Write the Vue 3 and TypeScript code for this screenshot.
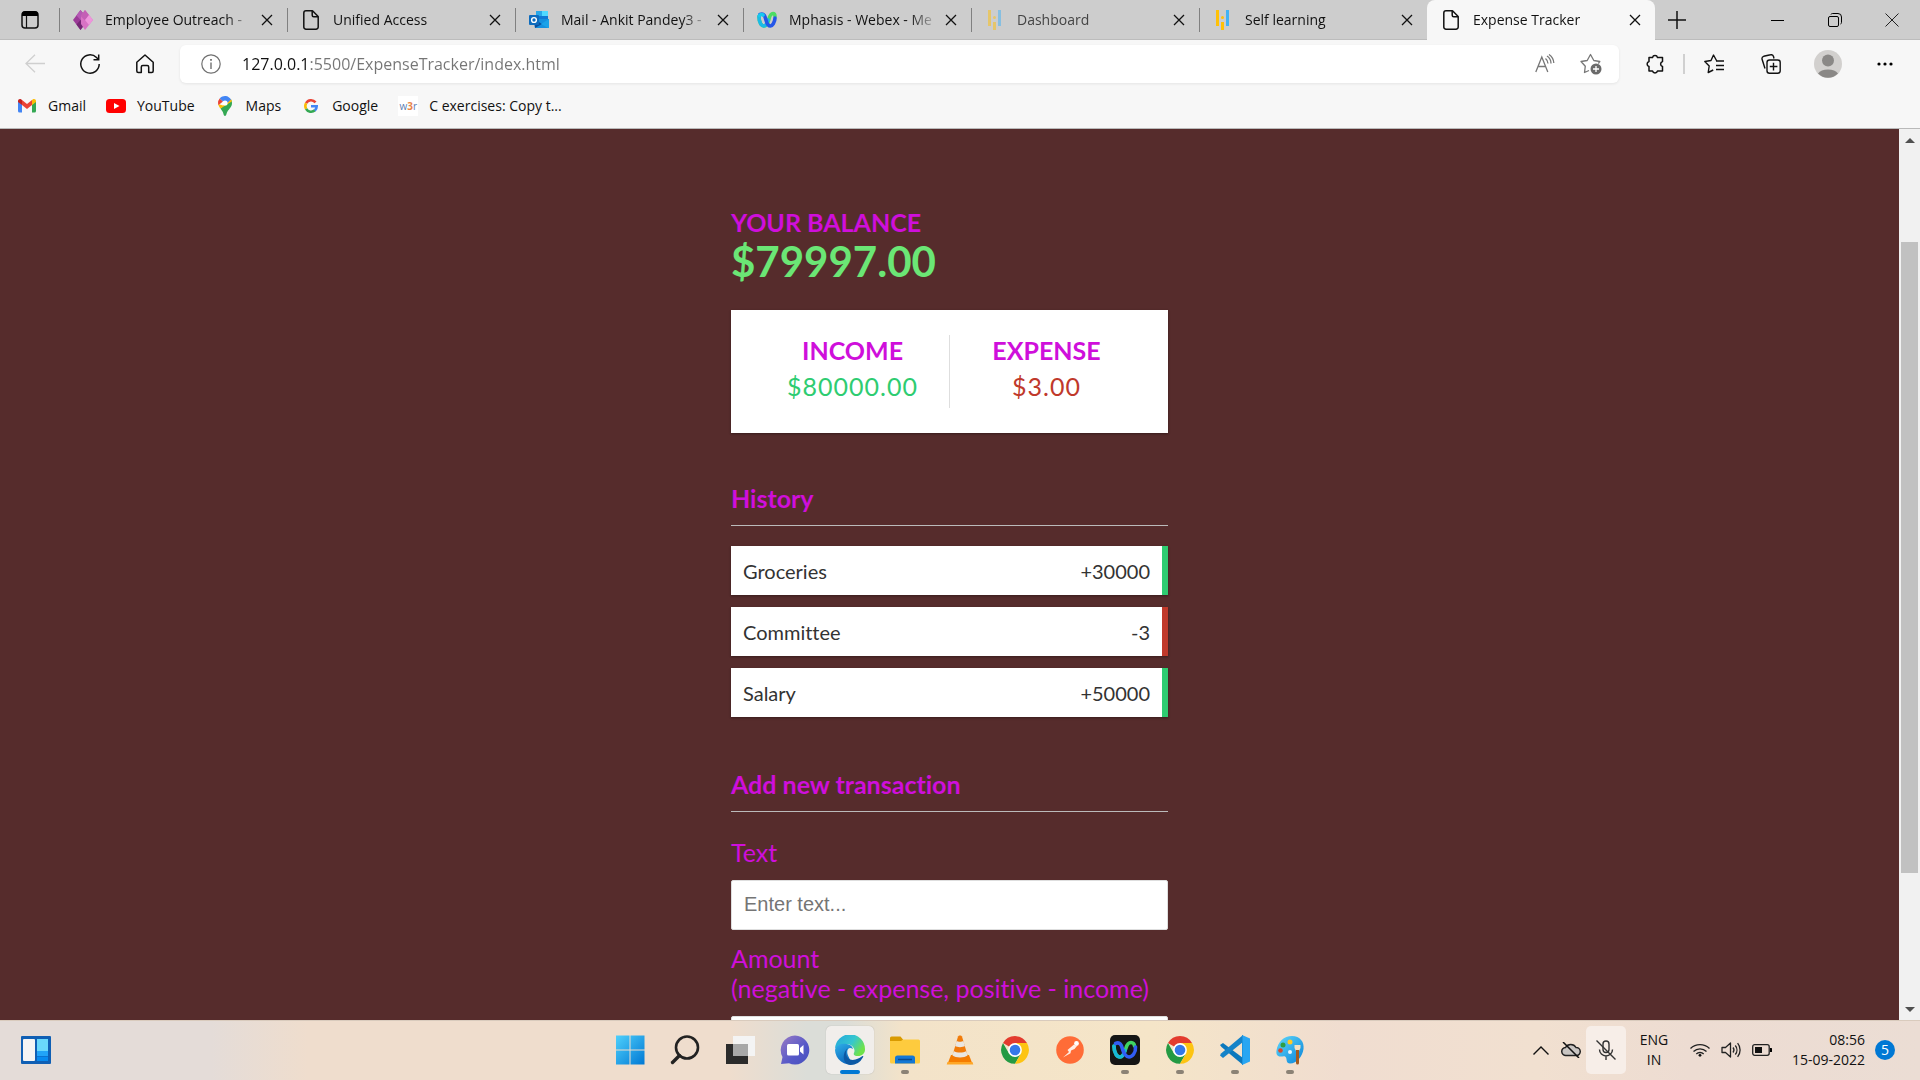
<script setup lang="ts">
import { computed, ref } from 'vue'

interface Tab {
  title: string
  icon: string
  faded?: boolean
}
interface Transaction {
  text: string
  amount: number
}
interface TaskbarApp {
  name: string
  icon: string
  running?: boolean
  active?: boolean
}

const tabs: Tab[] = [
  { title: 'Employee Outreach -', icon: 'powerapps' },
  { title: 'Unified Access', icon: 'page' },
  { title: 'Mail - Ankit Pandey3 -', icon: 'outlook' },
  { title: 'Mphasis - Webex - Me', icon: 'webex' },
  { title: 'Dashboard', icon: 'bars', faded: true },
  { title: 'Self learning', icon: 'bars' },
  { title: 'Expense Tracker', icon: 'page' },
]
const activeTab = ref(6)

const bookmarks = [
  { label: 'Gmail', icon: 'gmail' },
  { label: 'YouTube', icon: 'youtube' },
  { label: 'Maps', icon: 'maps' },
  { label: 'Google', icon: 'google' },
  { label: 'C exercises: Copy t...', icon: 'w3r' },
]

const url = ref('127.0.0.1:5500/ExpenseTracker/index.html')

const transactions = ref<Transaction[]>([
  { text: 'Groceries', amount: 30000 },
  { text: 'Committee', amount: -3 },
  { text: 'Salary', amount: 50000 },
])
const sum = (list: Transaction[]) => list.reduce((total, t) => total + t.amount, 0)
const balance = computed(() => sum(transactions.value).toFixed(2))
const income = computed(() => sum(transactions.value.filter((t) => t.amount > 0)).toFixed(2))
const expense = computed(() => Math.abs(sum(transactions.value.filter((t) => t.amount < 0))).toFixed(2))
const signed = (n: number) => (n < 0 ? `-${Math.abs(n)}` : `+${n}`)

const newText = ref('')
const newAmount = ref('')

const apps: TaskbarApp[] = [
  { name: 'Start', icon: 'start' },
  { name: 'Search', icon: 'search' },
  { name: 'Task View', icon: 'taskview' },
  { name: 'Chat', icon: 'chat' },
  { name: 'Microsoft Edge', icon: 'edge', running: true, active: true },
  { name: 'File Explorer', icon: 'folder', running: true },
  { name: 'VLC', icon: 'vlc' },
  { name: 'Chrome', icon: 'chrome' },
  { name: 'Postman', icon: 'postman' },
  { name: 'Webex', icon: 'webexapp', running: true },
  { name: 'Chrome profile', icon: 'chrome', running: true },
  { name: 'Visual Studio Code', icon: 'vscode', running: true },
  { name: 'Paint', icon: 'paint', running: true },
]
</script>

<template>
  <div class="screen">
    <header class="browser">
      <div class="tabstrip">
        <button class="tab-actions" aria-label="Tab actions menu">
          <svg width="20" height="20" viewBox="0 0 20 20"><rect x="2" y="2" width="16" height="16" rx="3" fill="none" stroke="#111" stroke-width="1.5" /><path d="M2 6V4a3 3 0 0 1 3-3h10a3 3 0 0 1 3 3v2z" fill="#000" /><path d="M6.500 6v12" stroke="#111" stroke-width="1.200" /></svg>
        </button>
        <div class="tabs">
          <div
            v-for="(tab, i) in tabs"
            :key="tab.title"
            class="tab"
            :class="{ active: i === activeTab, faded: tab.faded }"
          >
            <button class="tab-main" @click="activeTab = i">
              <svg v-if="tab.icon === 'powerapps'" class="fav" viewBox="0 0 20 20"><path d="M7.500 0 0 10l7.500 10 5-6.500V6z" fill="#9b3a97" /><path d="M3.500 5.500 7.500 0l4 5.500-4 4.500z" fill="#b558b4" /><path d="M3.500 14.500 7.500 10l4 4.500-4 5.500z" fill="#742774" /><path d="M12 0 8 6v8l4 6 8-10z" fill="#d872c4" /><path d="m12 0-4.500 6 4.500 4.500L16 5z" fill="#c45fb5" /><path d="m12 10 4-5 4 5-4 5z" fill="#ee96dc" /></svg>
              <svg v-else-if="tab.icon === 'page'" class="fav" viewBox="0 0 20 20" fill="none" stroke="#111" stroke-width="1.500" stroke-linejoin="round"><path d="M5 .8h6.500L17.200 6.500V17a2.200 2.200 0 0 1-2.200 2.200H5A2.200 2.200 0 0 1 2.800 17V3A2.200 2.200 0 0 1 5 .8z" /><path d="M11.200 1v4.200a1.500 1.500 0 0 0 1.500 1.500H17" /></svg>
              <svg v-else-if="tab.icon === 'outlook'" class="fav" viewBox="0 0 20 20"><path d="M7 1h12v9H7z" fill="#0f78d4" /><path d="M13 1h6v5h-6z" fill="#50d9ff" /><path d="M7 1h6v5H7z" fill="#28a8ea" /><path d="M5 9h15v9H6z" fill="#1490df" /><path d="m5 9 8 5-7 4z" fill="#0a4f9e" /><path d="m20 9-8 5 7 4h1z" fill="#1ba2e8" /><rect y="5" width="10" height="10" rx="1" fill="#0f6cbd" /><circle cx="5" cy="10" r="2.400" fill="none" stroke="#fff" stroke-width="1.400" /></svg>
              <svg v-else-if="tab.icon === 'webex'" class="fav" viewBox="0 0 20 20" fill="none" stroke-width="3.600" stroke-linecap="round"><path d="M2 6.500C2 14 5 16 7 16s4-3 5-7 2.500-5.500 4-5.500 2 1.500 2 3" stroke="#4cdd62" /><path d="M2 6.500C2 14 5 16 7 16s3-3 4-6" stroke="#1bb9e8" /><path d="M3 4.500C7 3 8 6 9 10s3 6 4.500 6S18 12.500 18 8" stroke="#2456e8" /><path d="M2.500 5.500C3 4.500 5 4 6 5" stroke="#17c8ef" /></svg>
              <svg v-else class="fav" viewBox="0 0 20 20"><path d="M3 0h3v16H3zM8 12h3v8H8z" fill="#ffc107" /><circle cx="9.500" cy="7.500" r="1.500" fill="#ffc107" /><path d="M13 0h3v16h-3z" fill="#42b3f5" /></svg>
              <span class="tab-title">{{ tab.title }}</span>
            </button>
            <button class="tab-close" :aria-label="`Close ${tab.title}`">
              <svg width="12" height="12" viewBox="0 0 12 12"><path d="m1 1 10 10M11 1 1 11" stroke="#111" stroke-width="1.300" /></svg>
            </button>
          </div>
        </div>
        <button class="new-tab" aria-label="New tab">
          <svg width="18" height="18" viewBox="0 0 18 18"><path d="M9 0v18M0 9h18" stroke="#111" stroke-width="1.500" /></svg>
        </button>
        <div class="window-controls">
          <button aria-label="Minimize"><svg width="14" height="14" viewBox="0 0 14 14"><path d="M0 7.500h13" stroke="#000" /></svg></button>
          <button aria-label="Restore"><svg width="14" height="14" viewBox="0 0 14 14" fill="none" stroke="#000"><rect x=".5" y="3.500" width="10" height="10" rx="1.500" /><path d="M3 1.500A1.500 1.500 0 0 1 4.500.5H10A3.500 3.500 0 0 1 13.500 4v5.500A1.500 1.500 0 0 1 12.500 11" /></svg></button>
          <button aria-label="Close window"><svg width="14" height="14" viewBox="0 0 14 14"><path d="m.5.5 13 13M13.500.5l-13 13" stroke="#222" /></svg></button>
        </div>
      </div>

      <div class="toolbar">
        <nav class="nav-buttons">
          <button aria-label="Back"><svg width="20" height="20" viewBox="0 0 20 20" fill="none" stroke="#cfcfcf" stroke-width="1.300"><path d="M20 9.500H1M10 .8 1 9.500l9 8.700" /></svg></button>
          <button aria-label="Refresh"><svg width="20" height="20" viewBox="0 0 20 20" fill="none" stroke="#111" stroke-width="1.500"><path d="M19.200 10A9.200 9.200 0 1 1 16.500 3.500L18.500 5.500" /><path d="M18.700.5v5.200h-5.200" /></svg></button>
          <button aria-label="Home"><svg width="20" height="20" viewBox="0 0 20 20" fill="none" stroke="#111" stroke-width="1.500" stroke-linejoin="round"><path d="M1.800 8.200 10 1l8.200 7.200V17a1.500 1.500 0 0 1-1.500 1.500h-3V13a1.500 1.500 0 0 0-1.500-1.500H7.800A1.500 1.500 0 0 0 6.300 13v5.500h-3A1.500 1.500 0 0 1 1.800 17z" /></svg></button>
        </nav>
        <div class="address">
          <button class="site-info" aria-label="View site information"><svg width="20" height="20" viewBox="0 0 20 20" fill="none" stroke="#707070" stroke-width="1.200"><circle cx="10" cy="10" r="9.200" /><path d="M10 8.500V15" stroke-width="1.400" /><path d="M10 5v1.800" stroke-width="1.800" /></svg></button>
          <input v-model="url" class="url" type="text" aria-label="Address and search bar" spellcheck="false" />
          <button aria-label="Read aloud"><svg width="20" height="20" viewBox="0 0 20 20" fill="none" stroke="#777" stroke-width="1.300"><path d="m.8 18 6-15 6 15M3 12.500h7.600" /><path d="M10.500 4.500a7 7 0 0 1 2.500 5M12 2a9 9 0 0 1 4 7.500M14 .5A11 11 0 0 1 18.800 9" /></svg></button>
          <button aria-label="Add to favorites"><svg width="22" height="22" viewBox="0 0 22 22" fill="none" stroke="#777" stroke-width="1.300" stroke-linejoin="round"><path d="M9 17.500 4.500 19.500l.8-6.300L1 8.500 7.200 7.500 10.500 1.500l3.300 6 6 1-1.500 2" /><circle cx="16" cy="16" r="5.500" fill="#6a6a6a" stroke="none" /><path d="M16 13v6M13 16h6" stroke="#fff" /></svg></button>
        </div>
        <div class="toolbar-actions">
          <button aria-label="Extensions"><svg width="20" height="20" viewBox="0 0 20 20" fill="none" stroke="#111" stroke-width="1.500" stroke-linejoin="round"><path d="M4 3.500h3.500a2.600 2.600 0 0 1 5 0H17.500V7.500a2.600 2.600 0 0 0 0 5V17h-5a2.600 2.600 0 0 1-5 0H4v-4.500a2.600 2.600 0 0 1 0-5z" /></svg></button>
          <span class="divider"></span>
          <button aria-label="Favorites"><svg width="20" height="20" viewBox="0 0 20 20" fill="none" stroke="#111" stroke-width="1.400" stroke-linejoin="round"><path d="M12.500 6.500 9.500 1 7 6.500.8 7.500 5.200 12l-1 6.500 5-2.500M12 7h8M12 11.500h8M12 15.500h8" /></svg></button>
          <button aria-label="Collections"><svg width="20" height="20" viewBox="0 0 20 20" fill="none" stroke="#111" stroke-width="1.400"><path d="M4 14.500 1 5a2.500 2.500 0 0 1 1.700-2.700L9.500.8A2.500 2.500 0 0 1 12.500 2.500l.5 2" /><rect x="6" y="6" width="13.200" height="13.200" rx="2.500" /><path d="M12.500 8.800v7.600M8.800 12.500h7.600" /></svg></button>
          <button aria-label="Profile"><svg width="28" height="28" viewBox="0 0 28 28"><circle cx="14" cy="14" r="14" fill="#d2d0ce" /><circle cx="14" cy="10.500" r="6" fill="#8a8886" /><path d="M4 23.500a11 7 0 0 1 20 0 14 14 0 0 1-20 0z" fill="#8a8886" /></svg></button>
          <button aria-label="Settings and more"><svg width="16" height="4" viewBox="0 0 16 4"><circle cx="2" cy="2" r="1.600" /><circle cx="8" cy="2" r="1.600" /><circle cx="14" cy="2" r="1.600" /></svg></button>
        </div>
      </div>

      <nav class="bookmarks" aria-label="Favorites bar">
        <a v-for="b in bookmarks" :key="b.label" href="#">
          <svg v-if="b.icon === 'gmail'" width="20" height="20" viewBox="-1 0 20 20"><path d="M0 5v10a1.500 1.500 0 0 0 1.500 1.500H4V8.500z" fill="#4285f4" /><path d="M18 5v10a1.500 1.500 0 0 1-1.500 1.500H14V8.500z" fill="#34a853" /><path d="M14 4v5l4-3V5c0-2-2-2.500-3-1.700z" fill="#fbbc04" /><path d="M0 5v1l4 3V4L3 3.300C2 2.500 0 3 0 5z" fill="#c5221f" /><path d="m4 4 5 4 5-4v5l-5 4-5-4z" fill="#ea4335" /></svg>
          <svg v-else-if="b.icon === 'youtube'" width="20" height="20" viewBox="0 0 20 20"><rect y="3" width="20" height="14" rx="3.500" fill="#f00" /><path d="m8 7 5.500 3L8 13z" fill="#fff" /></svg>
          <svg v-else-if="b.icon === 'maps'" width="20" height="20" viewBox="-3 0 20 20"><path d="M14 7c0 4-3 6-4.500 8.500C8.500 17 8.500 20 7 20s-1.500-3-2.500-4.500L2.500 12.500 13 3.500c.7 1 1 2.200 1 3.500z" fill="#34a853" /><path d="M2.500 12.500C1.200 11 .5 9.500.2 8L5 9.500 9 5l4-2c.5 1 .8 2 .8 2.500z" fill="#fbbc04" /><path d="M0 7a7 7 0 0 1 1.700-4.600L5 5.500.5 9A7 7 0 0 1 0 7z" fill="#ea4335" /><path d="M1.700 2.400A7 7 0 0 1 13 3.500L8 8 4.500 5z" fill="#4285f4" /><circle cx="7" cy="7" r="2.600" fill="#fff" /></svg>
          <svg v-else-if="b.icon === 'google'" width="20" height="20" viewBox="-3 0 20 20" fill="none" stroke-width="2.600"><path d="M11.500 6.300A5.700 5.700 0 0 0 2.100 7.200" stroke="#ea4335" /><path d="M2.100 7.200a5.700 5.700 0 0 0 0 5.600" stroke="#fbbc05" /><path d="M2.100 12.800a5.700 5.700 0 0 0 8.800 1.500" stroke="#34a853" /><path d="M10.800 14.500A5.700 5.700 0 0 0 12.700 10.200H7" stroke="#4285f4" /></svg>
          <span v-else class="w3r">w<b>3</b>r</span>
          <span>{{ b.label }}</span>
        </a>
      </nav>
    </header>

    <div class="viewport">
      <main class="page">
        <div class="container">
          <h4>YOUR BALANCE</h4>
          <h1>${{ balance }}</h1>

          <section class="totals">
            <div>
              <h4>INCOME</h4>
              <p class="money plus">${{ income }}</p>
            </div>
            <div>
              <h4>EXPENSE</h4>
              <p class="money minus">${{ expense }}</p>
            </div>
          </section>

          <h3>History</h3>
          <ul class="history">
            <li v-for="t in transactions" :key="t.text" :class="t.amount < 0 ? 'minus' : 'plus'">
              <span>{{ t.text }}</span><span>{{ signed(t.amount) }}</span>
            </li>
          </ul>

          <h3>Add new transaction</h3>
          <form @submit.prevent>
            <label for="text">Text</label>
            <input id="text" v-model="newText" type="text" placeholder="Enter text..." />
            <label for="amount">Amount<br />(negative - expense, positive - income)</label>
            <input id="amount" v-model="newAmount" type="text" />
          </form>
        </div>
      </main>
      <div class="scrollbar" aria-hidden="true">
        <svg width="10" height="5" viewBox="0 0 10 5"><path d="M0 5 5 0l5 5z" fill="#505050" /></svg>
        <div class="track"><div class="thumb"></div></div>
        <svg width="10" height="5" viewBox="0 0 10 5"><path d="m0 0 5 5 5-5z" fill="#505050" /></svg>
      </div>
    </div>

    <footer class="taskbar">
      <div class="side">
        <button class="widgets" aria-label="Widgets">
          <svg width="30" height="28" viewBox="0 0 30 28"><rect width="30" height="28" rx="1" fill="#0f5fb4" /><rect x="2" y="3" width="12" height="22" rx="1" fill="#f4f4f4" /><path d="M16 3h11v12H16z" fill="#69d8fb" /><path d="M16 15h11v5H16z" fill="#21a4f8" /><path d="M16 20.500h11V25H16z" fill="#078aef" /></svg>
        </button>
      </div>
      <div class="apps">
        <button v-for="app in apps" :key="app.name" :aria-label="app.name" :class="{ running: app.running, current: app.active }">
          <svg v-if="app.icon === 'start'" viewBox="0 0 30 30"><defs><linearGradient id="gStart" x2="1" y2="1" gradientUnits="objectBoundingBox"><stop stop-color="#4fd0fb" /><stop offset="1" stop-color="#0078d4" /></linearGradient></defs><path d="M1 .5h13.500v14H1zM15.500.5H29.500v14h-14zM1 15.500h13.500v14H1zM15.500 15.500h14v14h-14z" fill="url(#gStart)" /></svg>
          <svg v-else-if="app.icon === 'search'" viewBox="0 0 30 30" fill="none"><circle cx="17" cy="12.500" r="11" stroke="#222" stroke-width="2.600" /><path d="m9.500 20.500-7 7" stroke="#222" stroke-width="3.400" stroke-linecap="round" /></svg>
          <svg v-else-if="app.icon === 'taskview'" viewBox="0 0 30 30"><path d="M1 9h22v20H1z" fill="#2b2b2b" /><path d="M8 1h22v20H8z" fill="#f4f4f4" /><path d="M8 9h15v12H8z" fill="#a8a8a8" /></svg>
          <svg v-else-if="app.icon === 'chat'" viewBox="0 0 30 30"><defs><linearGradient id="gChat" x2="1" y2="1"><stop stop-color="#9a7bc4" /><stop offset=".6" stop-color="#5558c8" /><stop offset="1" stop-color="#4650bd" /></linearGradient></defs><path d="M15 .5A14.500 14.500 0 1 1 9 28.300L1 29l1.500-7A14.500 14.500 0 0 1 15 .5z" fill="url(#gChat)" /><rect x="7" y="9" width="12" height="11.500" rx="1.500" fill="#fff" /><path d="m20 13 3.500-3v9.500L20 16.500z" fill="#fff" /></svg>
          <svg v-else-if="app.icon === 'edge'" viewBox="0 0 30 30"><defs><linearGradient id="gEdgeA" x2="1" y2=".5"><stop stop-color="#25a6dd" /><stop offset=".6" stop-color="#35c6cf" /><stop offset="1" stop-color="#6fe24a" /></linearGradient><linearGradient id="gEdgeB" y2="1" x2=".5"><stop stop-color="#2fb0e8" /><stop offset="1" stop-color="#0b66bd" /></linearGradient></defs><path d="M0 14A15 15 0 0 1 30 14.500c0 4-3 6.500-7 6.500-3.500 0-5-1.500-4-3C21 14 17 9 11 9 5 9 1 12 0 14z" fill="url(#gEdgeA)" /><path d="M0 15C1 10 5.500 8.500 10 8.800c4 .2 7.500 2.200 8 5.200-5-3-7 2-5 6.500 1.500 4 4 7 6 8.500A15 15 0 0 1 0 15z" fill="url(#gEdgeB)" /><path d="M13 13c-5 6 0 14 7.500 11.500 3-.8 5-2 7-3.500.8-.3 1 .3.500 1.200A14.500 14.500 0 0 1 15 30C7 29 7 17 13 13z" fill="#0c59a4" /></svg>
          <svg v-else-if="app.icon === 'folder'" viewBox="0 0 30 30"><path d="M0 3a1.500 1.500 0 0 1 1.500-1.500h9L13 4.500V9H0z" fill="#d99a00" /><path d="M0 6h11l2-1.500h15.500A1.500 1.500 0 0 1 30 6v21a1.500 1.500 0 0 1-1.500 1.500h-27A1.500 1.500 0 0 1 0 27z" fill="#fecb3e" /><path d="M5 28.500V23a2.500 2.500 0 0 1 2.500-2.500h15A2.500 2.500 0 0 1 25 23v5.500z" fill="#1478d4" /><path d="M8 24.500h14" stroke="#094a8c" stroke-width="1.500" /></svg>
          <svg v-else-if="app.icon === 'vlc'" viewBox="0 0 30 30"><path d="M6 20h18l3.500 9h-25z" fill="#f57c00" /><path d="M13 1.500c.5-1.500 3.500-1.500 4 0L23 22c-1.500 3-14.500 3-16 0z" fill="#f07b0a" /><path d="m11.600 6-1.500 5c2 1.500 7.800 1.500 9.800 0L18.400 6c-1.500 1-5.300 1-6.800 0zM8.700 16l-1.200 4.500c3 2.500 12 2.500 15 0L21.300 16c-3 2-9.600 2-12.600 0z" fill="#e9e6e2" /><path d="M2.500 27h25l.8 2.500H1.700z" fill="#ffa726" /></svg>
          <svg v-else-if="app.icon === 'chrome'" viewBox="0 0 30 30"><path d="M15 15 3 8.100A13.800 13.800 0 0 1 27 8.100H15z" fill="#e33b2e" /><path d="M3 8.100A13.800 13.800 0 0 0 15 28.800L21 18.500 9 18.500z" fill="#249a43" /><path d="M27 8.100A13.800 13.800 0 0 1 15 28.800L21 18.500 15 8.100z" fill="#fdc413" /><circle cx="15" cy="15" r="6.900" fill="#fff" /><circle cx="15" cy="15" r="5.300" fill="#3578e8" /></svg>
          <svg v-else-if="app.icon === 'postman'" viewBox="0 0 30 30"><circle cx="15" cy="15" r="13.800" fill="#ff6c37" /><circle cx="21.500" cy="8.500" r="2.400" fill="#fff" /><path d="M19 9.500 12.500 15l1.500 2-6 5.500 7.500-4.200.5-2.800 3.500-1.500 2.500-3z" fill="#ffeee6" /></svg>
          <svg v-else-if="app.icon === 'webexapp'" viewBox="0 0 30 30" fill="none" stroke-width="3.600" stroke-linecap="round"><rect width="30" height="30" rx="5" fill="#151515" /><path d="M4 11c0 8 3.500 11 6 11s4.500-4 6-9 3-5.500 5-5.500 3.500 1.500 3.500 3.500" stroke="#3fd463" /><path d="M4 11c0 8 3.500 11 6 11s4-3 5-6.500" stroke="#16b7d8" /><path d="M5.500 8.500C10 6.500 11.500 10 12.500 14s3.500 8 6.500 8 7-4 6.500-10" stroke="#315df5" /></svg>
          <svg v-else-if="app.icon === 'vscode'" viewBox="0 0 30 30"><path d="m22 0 8 3.500v23L22 30z" fill="#29a6f2" /><path d="M0 10 3 8l20 15v7L1.500 12z" fill="#0b78bd" /><path d="M0 20.500 3 23 23 7V0L1 18.500z" fill="#1583c8" /><path d="M22 0v30l1-.5V.5z" fill="#1c94df" /></svg>
          <svg v-else viewBox="0 0 30 30"><defs><linearGradient id="gPaint" x2="1" y2="1"><stop stop-color="#5fd8fb" /><stop offset="1" stop-color="#0a84d8" /></linearGradient></defs><path d="M17 1C25 1 29.500 7 28.500 14S22 28.500 15 28.500c-4 0-3-4-4-6s-3-1-5.500-1C2 21.500 1 19 1.500 15.500 2.500 7 9 1 17 1z" fill="url(#gPaint)" /><circle cx="15" cy="7" r="2.500" fill="#ffc928" /><circle cx="8" cy="10" r="2.500" fill="#2e9e44" /><circle cx="5.500" cy="15.500" r="2.300" fill="#d9482b" /><circle cx="15" cy="17" r="2" fill="#e9f6fb" /><path d="M19.500 10h6v3l-1.500 3h-3l-1.500-3z" fill="#f3dfc0" /><path d="M21 15h3v13a1.500 1.500 0 0 1-3 0z" fill="#a45a1d" /></svg>
        </button>
      </div>
      <div class="side tray">
        <button class="t-chevron" aria-label="Show hidden icons"><svg width="16" height="9" viewBox="0 0 16 9"><path d="m.5 8.500 7.500-7.500 7.500 7.500" fill="none" stroke="#111" stroke-width="1.400" /></svg></button>
        <button class="t-cloud" aria-label="OneDrive"><svg width="20" height="16" viewBox="0 0 20 16"><path d="M5 13.500a4 4 0 0 1-.5-8A6 6 0 0 1 15 5.500a4 4 0 0 1 .5 8z" fill="#c9c5c2" stroke="#222" stroke-width="1.500" /><path d="m2 0 16 16" stroke="#111" stroke-width="1.500" /></svg></button>
        <button class="t-mic" aria-label="Microphone muted"><svg width="20" height="20" viewBox="0 0 20 20" fill="none" stroke="#333" stroke-width="1.400"><rect x="7" y="1" width="6" height="11.500" rx="3" /><path d="M3.500 9.500a6.500 6.500 0 0 0 13 0M10 16v4M.5.5l19 19" /></svg></button>
        <button class="t-lang">ENG<br />IN</button>
        <button class="t-status" aria-label="Network, volume and battery">
          <svg width="20" height="14" viewBox="0 0 20 14" fill="none" stroke="#222" stroke-width="1.300"><path d="M.5 5.500a13.500 13.500 0 0 1 19 0M3.500 8.500a9.200 9.200 0 0 1 13 0M6.300 11a5.300 5.300 0 0 1 7.400 0" /><circle cx="10" cy="12.300" r="1.400" fill="#111" stroke="none" /></svg>
          <svg width="20" height="16" viewBox="0 0 20 16" fill="none" stroke="#222" stroke-width="1.300" stroke-linejoin="round"><path d="M1 5.500h3.500L9.500 1v14l-5-4.500H1z" /><path d="M12 5.500a4 4 0 0 1 0 5M14.300 3.500a7 7 0 0 1 0 9M16.600 1.200a10.500 10.500 0 0 1 0 13.600" /></svg>
          <svg width="20" height="12" viewBox="0 0 20 12"><rect x=".7" y=".7" width="16.500" height="10.600" rx="2" fill="none" stroke="#222" stroke-width="1.300" /><path d="M3 3h7v6H3z" fill="#111" /><path d="M18 4h1.500a.5.500 0 0 1 .5.500v3a.5.500 0 0 1-.5.500H18z" /></svg>
        </button>
        <button class="t-clock">08:56<br />15-09-2022</button>
        <button class="t-badge" aria-label="5 notifications">5</button>
      </div>
    </footer>
  </div>
</template>

<style>
body {
  margin: 0;
}
</style>

<style scoped>
.screen {
  display: flex;
  flex-direction: column;
  height: 100vh;
  overflow: hidden;
  font-family: 'Open Sans', 'Noto Sans', sans-serif;
  color: #111;
}
*,
*::before,
*::after {
  box-sizing: border-box;
}
button {
  display: flex;
  align-items: center;
  justify-content: center;
  padding: 0;
  border: 0;
  background: none;
  color: inherit;
  font: inherit;
}
svg {
  display: block;
  flex: none;
}

/* Browser chrome */
.browser {
  flex: none;
  background: #f7f7f7;
  border-bottom: 1px solid #b9b9b9;
}
.tabstrip {
  display: flex;
  height: 40px;
  background: #cdcdcd;
  box-shadow: inset 0 -1px #bcbcbc;
}
.tab-actions {
  width: 59px;
  height: 40px;
}
.tabs {
  display: flex;
  flex: 0 1 1596px;
  min-width: 0;
}
.tab {
  position: relative;
  display: flex;
  flex: 1 1 0;
  min-width: 0;
  align-items: center;
  padding-right: 7px;
}
.tab::before {
  content: '';
  width: 1px;
  height: 24px;
  background: #808080;
}
.tab.active {
  background: #f7f7f7;
  border-radius: 8px 8px 0 0;
}
.tab.active::before {
  background: none;
}
.tab-main {
  display: flex;
  flex: 1;
  min-width: 0;
  gap: 12px;
  padding-left: 13px;
}
.fav {
  width: 20px;
  height: 20px;
}
.faded .fav {
  opacity: 0.5;
}
.faded .tab-title {
  color: #444;
}
.tab-title {
  flex: 1;
  overflow: hidden;
  white-space: nowrap;
  text-align: left;
  font-size: 14px;
  line-height: 20px;
  mask-image: linear-gradient(to right, #000 calc(100% - 28px), transparent);
}
.tab-close {
  width: 26px;
  height: 30px;
}
.new-tab {
  width: 44px;
}
.window-controls {
  display: flex;
  margin-left: auto;
}
.window-controls button {
  width: 57px;
}
.toolbar {
  display: flex;
  align-items: center;
  height: 47px;
}
.nav-buttons {
  display: flex;
  padding-left: 7px;
  padding-right: 8px;
}
.nav-buttons button {
  width: 55px;
  height: 38px;
}
.address {
  display: flex;
  flex: 1;
  align-items: center;
  height: 38px;
  padding-right: 5px;
  background: #fff;
  border-radius: 6px;
  box-shadow: 0 1px 3px #00000014;
}
.address button {
  width: 46px;
  height: 38px;
}
.address .site-info {
  width: 62px;
}
.url {
  flex: 1;
  min-width: 0;
  padding: 0;
  border: 0;
  outline: 0;
  font: inherit;
  font-size: 16px;
  line-height: 24px;
  color: transparent;
  caret-color: #111;
  background: linear-gradient(to right, #111 66px, #757575 66px);
  background-clip: text;
  -webkit-background-clip: text;
}
.toolbar-actions {
  display: flex;
  align-items: center;
  padding-left: 7px;
  padding-right: 7px;
}
.toolbar-actions button {
  width: 57px;
  height: 38px;
}
.divider {
  width: 2px;
  height: 20px;
  background: #d0d0d0;
}
.bookmarks {
  display: flex;
  align-items: center;
  gap: 20px;
  height: 41px;
  padding: 0 17px 4px;
}
.bookmarks a {
  display: flex;
  align-items: center;
  gap: 11px;
  color: #111;
  text-decoration: none;
  font-size: 14px;
  line-height: 20px;
}
.w3r {
  width: 20px;
  background: #fff;
  color: #5b7db1;
  font-size: 10px;
  text-align: center;
}
.w3r b {
  color: #e8844a;
}

/* Page */
.viewport {
  display: flex;
  flex: 1;
  min-height: 0;
  overflow: hidden;
}
.page {
  display: flex;
  flex: 1;
  justify-content: center;
  background: #562c2c;
  font-family: Lato, sans-serif;
  font-variant-ligatures: none;
  color: #cf0fdb;
}
.container {
  width: 437px;
  padding-top: 78px;
}
h1,
h3,
h4,
p,
ul {
  margin: 0;
}
h3,
h4,
label {
  font-size: 25px;
  line-height: 30px;
}
h1 {
  font-size: 42px;
  line-height: 48px;
  color: #6be675;
}
.totals {
  display: flex;
  margin: 25px 0 50px;
  padding: 25px;
  background: #fff;
  box-shadow: 0 1px 3px #0000001f, 0 1px 2px #0000003d;
}
.totals > div {
  flex: 1;
  height: 73px;
  text-align: center;
}
.totals > div + div {
  border-left: 1px solid #dedede;
}
.money {
  font-size: 25px;
  line-height: 42px;
  letter-spacing: 1px;
}
.money.plus {
  color: #2ecc71;
}
.money.minus {
  color: #c0392b;
}
h3 {
  padding-bottom: 12px;
  border-bottom: 1px solid #bbb;
}
.history {
  display: grid;
  gap: 12px;
  margin: 20px 0 52px;
  padding: 0;
  list-style: none;
}
.history li {
  display: flex;
  justify-content: space-between;
  padding: 13px 12px 11px;
  border-right: 6px solid #2ecc71;
  background: #fff;
  box-shadow: 0 1px 3px #0000001f, 0 1px 2px #0000003d;
  color: #333;
  font-size: 20px;
  line-height: 25px;
}
.history .minus {
  border-color: #c0392b;
}
form {
  padding-top: 25px;
}
label {
  display: block;
}
form input {
  display: block;
  width: 100%;
  height: 50px;
  margin: 13px 0;
  padding: 0 12px 2px;
  border: 1px solid #dedede;
  border-radius: 2px;
  background: #fff;
  font-family: 'Liberation Sans', Arial, sans-serif;
  font-size: 20px;
}
form input::placeholder {
  color: #757575;
}
.scrollbar {
  display: flex;
  flex: none;
  flex-direction: column;
  align-items: center;
  width: 21px;
  padding: 9px 0 8px;
  background: #f1f1f1;
}
.track {
  flex: 1;
  width: 17px;
  padding: 99px 0 134px;
}
.thumb {
  height: 100%;
  background: #c1c1c1;
}

/* Taskbar */
.taskbar {
  display: flex;
  flex: none;
  align-items: center;
  height: 60px;
  padding-bottom: 1px;
  border-top: 1px solid #d9cbbd;
  background: linear-gradient(to right, #e4dcd8 0, #e4dcd8 11%, #efddcd 16%, #efddcd 38%, #dbddd8 42%, #dbddd8 44%, #f3e3c9 47%, #f5e5c8 60%, #f0ddd0 70%, #f1e0d0 80%, #eddcd2 88%, #ebddd4 100%);
}
.side {
  display: flex;
  flex: 1;
}
.widgets {
  width: 72px;
  height: 48px;
}
.apps {
  display: flex;
  gap: 7px;
}
.apps button {
  position: relative;
  width: 48px;
  height: 48px;
  border-radius: 5px;
}
.apps svg {
  width: 30px;
  height: 30px;
}
.apps .current {
  background: #f1eeeb;
  box-shadow: 0 0 1px #0004;
}
.running::after {
  content: '';
  position: absolute;
  bottom: 0;
  width: 8px;
  height: 4px;
  border-radius: 2px;
  background: #8b8275;
}
.apps .current::after {
  width: 20px;
  background: #0078d4;
}
.tray {
  align-items: center;
  justify-content: flex-end;
  font-size: 14px;
  line-height: 20px;
}
.tray button {
  height: 48px;
}
.tray .t-chevron {
  width: 30px;
}
.tray .t-cloud {
  width: 30px;
}
.tray .t-mic {
  width: 40px;
  border-radius: 5px;
  background: #f7eee8;
}
.tray .t-lang {
  width: 56px;
}
.tray .t-status {
  gap: 11px;
  padding: 0 8px;
}
.tray .t-clock {
  width: 85px;
  justify-content: flex-end;
  text-align: right;
}
.tray .t-badge {
  width: 20px;
  height: 20px;
  margin: 0 25px 0 10px;
  border-radius: 50%;
  background: #0078d4;
  color: #fff;
}
</style>
